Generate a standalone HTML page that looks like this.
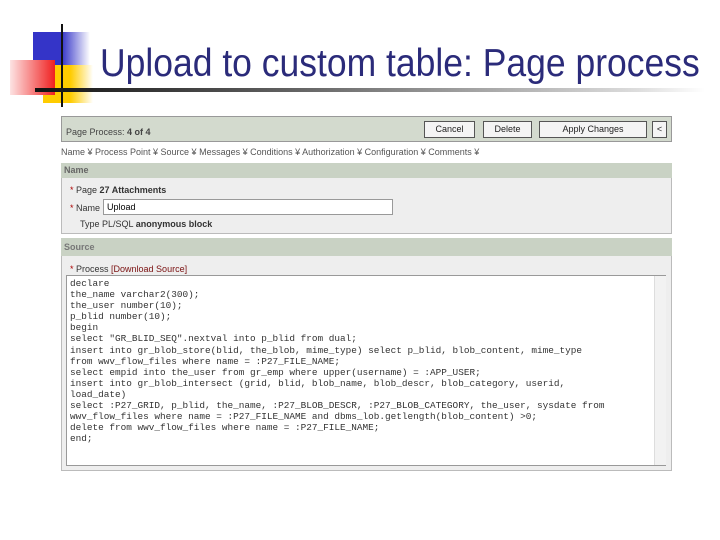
<!DOCTYPE html>
<html><head><style>
body{margin:0;width:720px;height:540px;background:#fff;position:relative;overflow:hidden;font-family:"Liberation Sans",sans-serif}
.a{position:absolute}
.btn{position:absolute;top:121px;height:15px;border:1px solid #555;background:#f4f4f4;font-size:9px;text-align:center;line-height:15px;color:#222}
.code{position:absolute;left:70px;top:278px;font-family:"Liberation Mono",monospace;font-size:9.4px;line-height:11.1px;color:#333;white-space:pre}
</style></head><body>
<div class="a" style="left:33px;top:32px;width:57px;height:33px;background:linear-gradient(90deg,#3434c8 50%,#fff)"></div>
<div class="a" style="left:43px;top:65px;width:50px;height:38px;background:linear-gradient(90deg,#ffcc00 55%,#fff)"></div>
<div class="a" style="left:10px;top:60px;width:45px;height:35px;background:linear-gradient(90deg,#fde3e3,#f02020)"></div>
<div class="a" style="left:61px;top:24px;width:2px;height:83px;background:#111"></div>
<div class="a" style="left:35px;top:88px;width:670px;height:4px;background:linear-gradient(90deg,#111,#666 40%,#ddd 90%,#fff)"></div>
<div class="a" style="left:100px;top:42px;font-size:39px;color:#2b2b7a;white-space:nowrap;transform:scaleX(0.91);transform-origin:0 0">Upload to custom table: Page process</div>

<div class="a" style="left:61px;top:116px;width:611px;height:26px;background:#d3dace;border:1px solid #999;box-sizing:border-box"></div>
<div class="a" style="left:66px;top:127px;font-size:9px;color:#444">Page Process: <b>4 of 4</b></div>
<div class="btn" style="left:424px;width:49px">Cancel</div>
<div class="btn" style="left:483px;width:47px">Delete</div>
<div class="btn" style="left:539px;width:106px">Apply Changes</div>
<div class="btn" style="left:652px;width:13px">&lt;</div>
<div class="a" style="left:61px;top:147px;font-size:9px;color:#555;white-space:nowrap">Name ¥ Process Point ¥ Source ¥ Messages ¥ Conditions ¥ Authorization ¥ Configuration ¥ Comments ¥</div>

<div class="a" style="left:61px;top:163px;width:611px;height:71px;background:#eee;border:1px solid #bbb;box-sizing:border-box"></div>
<div class="a" style="left:61px;top:163px;width:611px;height:15px;background:#c9d2c4"></div>
<div class="a" style="left:64px;top:165px;font-size:9px;font-weight:bold;color:#666">Name</div>
<div class="a" style="left:70px;top:185px;font-size:9px;color:#333"><span style="color:#a00">*</span> Page <b>27 Attachments</b></div>
<div class="a" style="left:70px;top:203px;font-size:9px;color:#333"><span style="color:#a00">*</span> Name</div>
<div class="a" style="left:103px;top:199px;width:290px;height:16px;background:#fff;border:1px solid #999;box-sizing:border-box;font-size:9px;padding:2px 3px">Upload</div>
<div class="a" style="left:80px;top:219px;font-size:9px;color:#333">Type PL/SQL <b>anonymous block</b></div>

<div class="a" style="left:61px;top:238px;width:611px;height:233px;background:#eee;border:1px solid #bbb;box-sizing:border-box"></div>
<div class="a" style="left:61px;top:238px;width:611px;height:18px;background:#c9d2c4"></div>
<div class="a" style="left:64px;top:242px;font-size:9px;font-weight:bold;color:#777">Source</div>
<div class="a" style="left:70px;top:264px;font-size:9px;color:#333"><span style="color:#a00">*</span> Process <span style="color:#7a1010">[Download Source]</span></div>
<div class="a" style="left:66px;top:275px;width:600px;height:191px;background:#fff;border:1px solid #999;box-sizing:border-box"></div>
<div class="a" style="left:654px;top:276px;width:11px;height:189px;background:#f2f2f2;border-left:1px solid #ddd"></div>
<div class="code">declare
the_name varchar2(300);
the_user number(10);
p_blid number(10);
begin
select "GR_BLID_SEQ".nextval into p_blid from dual;
insert into gr_blob_store(blid, the_blob, mime_type) select p_blid, blob_content, mime_type
from wwv_flow_files where name = :P27_FILE_NAME;
select empid into the_user from gr_emp where upper(username) = :APP_USER;
insert into gr_blob_intersect (grid, blid, blob_name, blob_descr, blob_category, userid,
load_date)
select :P27_GRID, p_blid, the_name, :P27_BLOB_DESCR, :P27_BLOB_CATEGORY, the_user, sysdate from
wwv_flow_files where name = :P27_FILE_NAME and dbms_lob.getlength(blob_content) &gt;0;
delete from wwv_flow_files where name = :P27_FILE_NAME;
end;</div>
</body></html>
